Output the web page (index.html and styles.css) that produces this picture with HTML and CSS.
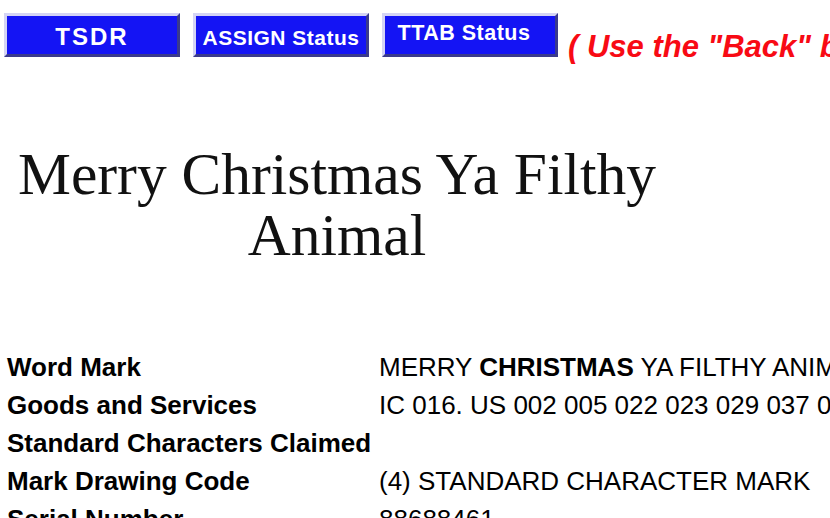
FILE: index.html
```html
<!DOCTYPE html>
<html>
<head>
<meta charset="utf-8">
<title>TESS Record</title>
<link rel="stylesheet" href="styles.css">
</head>
<body>
<div class="page">
  <div class="topbar">
    <span class="btn btn-tsdr">TSDR</span>
    <span class="btn btn-assign">ASSIGN Status</span>
    <span class="btn btn-ttab">TTAB Status</span>
    <span class="back-note">( Use the "Back" button of the Internet Browser to return to TESS)</span>
  </div>

  <div class="mark">
    <div class="mark-text">Merry Christmas Ya Filthy<br>Animal</div>
  </div>

  <table class="record">
    <tr><th>Word Mark</th><td>MERRY <b>CHRISTMAS</b> YA FILTHY ANIMAL</td></tr>
    <tr><th>Goods and Services</th><td>IC 016. US 002 005 022 023 029 037 038 050. G &amp; S: Greeting cards. FIRST USE: 20171101. FIRST USE IN COMMERCE: 20171101</td></tr>
    <tr><th>Standard Characters Claimed</th><td></td></tr>
    <tr><th>Mark Drawing Code</th><td>(4) STANDARD CHARACTER MARK</td></tr>
    <tr><th>Serial Number</th><td>88688461</td></tr>
    <tr><th>Filing Date</th><td>November 13, 2019</td></tr>
  </table>
</div>
</body>
</html>
```

FILE: styles.css
```css
html, body {
  margin: 0;
  padding: 0;
  background: #ffffff;
  overflow: hidden;
}

.page {
  width: 2000px;
  font-family: "Liberation Sans", Arial, sans-serif;
  color: #000;
}

.topbar {
  display: flex;
  align-items: flex-end;
  gap: 13px;
  padding: 13px 0 0 4px;
  height: 44px;
  white-space: nowrap;
}

.btn {
  box-sizing: border-box;
  display: flex;
  align-items: center;
  justify-content: center;
  flex: none;
  width: 176px;
  height: 44px;
  background: #1414f4;
  color: #ffffff;
  font-weight: bold;
  border-top: 3px solid #d4d4f4;
  border-left: 3px solid #d4d4f4;
  border-bottom: 3px solid #3a3a8c;
  border-right: 3px solid #3a3a8c;
}

.btn-tsdr {
  font-size: 24px;
  letter-spacing: 2px;
  padding-top: 3px;
}

.btn-assign {
  font-size: 21px;
  letter-spacing: 0.5px;
  padding-top: 5px;
}

.btn-ttab {
  font-size: 21.5px;
  letter-spacing: 0.5px;
  padding-bottom: 3px;
  padding-right: 12px;
}

.back-note {
  color: #f80a14;
  font-style: italic;
  font-weight: bold;
  font-size: 31px;
  line-height: 1;
  margin-left: -3px;
  margin-bottom: -5px;
}

.mark {
  padding: 87px 0 0 8px;
}

.mark-text {
  width: 658px;
  font-family: "Liberation Serif", "Times New Roman", serif;
  font-size: 59.5px;
  line-height: 61px;
  text-align: center;
  color: #111;
}

.record {
  border-collapse: collapse;
  margin: 82px 0 0 7px;
  font-size: 26px;
  white-space: nowrap;
}

.record th {
  text-align: left;
  font-weight: bold;
  width: 372px;
  padding: 0;
  height: 38px;
}

.record td {
  padding: 0;
  height: 38px;
}

.record td b {
  font-weight: bold;
}
```
